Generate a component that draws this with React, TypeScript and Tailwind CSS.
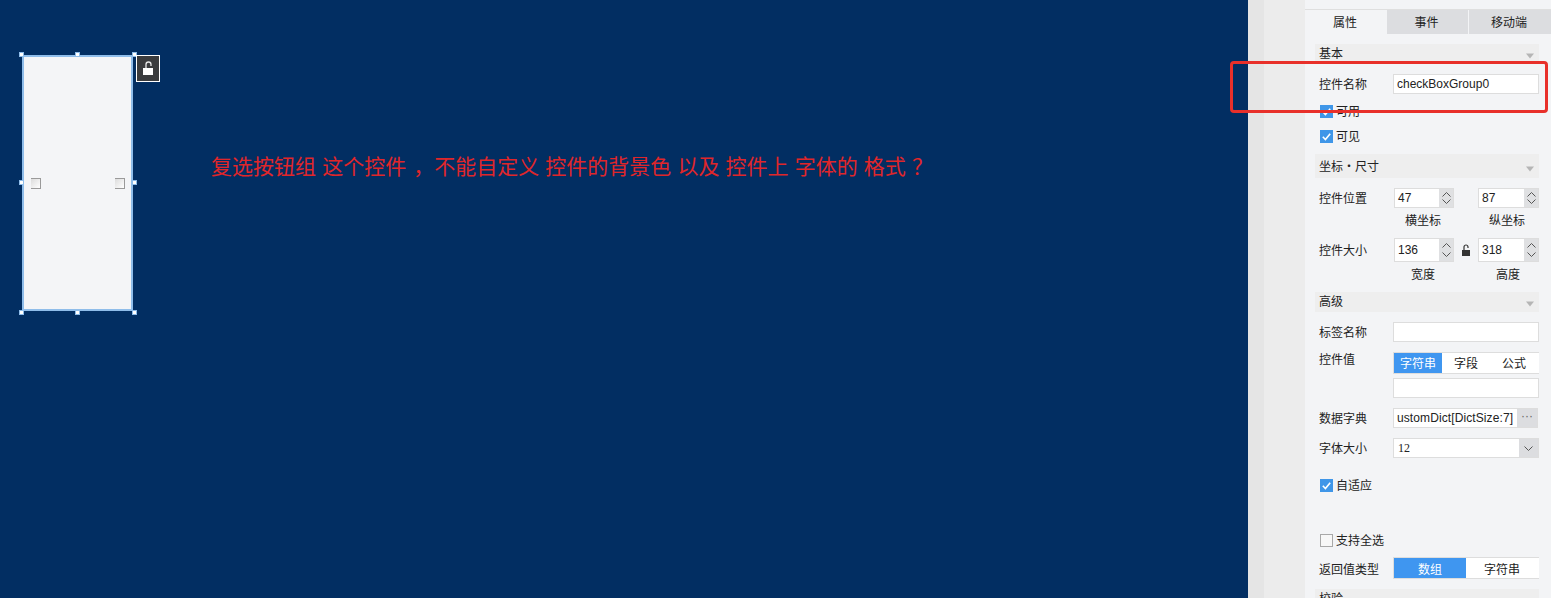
import type { ReactNode } from 'react';

const CJK = '[font-family:"Liberation_Sans","Noto_Sans_CJK_SC",sans-serif]';

function Section({ title, className = '' }: { title: string; className?: string }) {
  return (
    <div className={`flex items-center justify-between bg-[#eeeeee] pl-[4px] pr-[4px] ${className}`}>
      <span className="leading-none">{title}</span>
      <svg width="10" height="6" viewBox="0 0 10 6" className="mt-[4px]">
        <path d="M1 0.5h8L5 5.5z" fill="#b5b5b5" />
      </svg>
    </div>
  );
}

function Check({ label, checked = true, className = '' }: { label: string; checked?: boolean; className?: string }) {
  return (
    <div className={`flex items-center gap-[3px] pl-[5px] ${className}`}>
      {checked ? (
        <svg width="13" height="13" viewBox="0 0 13 13">
          <rect width="13" height="13" fill="#3f96e8" />
          <path d="M2.8 6.8l2.6 2.7 4.8-5.8" fill="none" stroke="#fff" strokeWidth="1.6" />
        </svg>
      ) : (
        <span className="h-[13px] w-[13px] border border-[#a8a8a8] bg-[#f7f7f7]" />
      )}
      <span className="leading-none">{label}</span>
    </div>
  );
}

function Row({
  label,
  children,
  className = 'h-[20px]',
  labelClass = 'leading-[22px]',
}: {
  label: string;
  children: ReactNode;
  className?: string;
  labelClass?: string;
}) {
  return (
    <div className={`flex ${className}`}>
      <span className={`w-[78px] shrink-0 pl-[4px] ${labelClass}`}>{label}</span>
      {children}
    </div>
  );
}

function Spinner({ value, tall = false, className = 'w-[61px]' }: { value: string; tall?: boolean; className?: string }) {
  return (
    <div className={`flex border border-[#dddddd] bg-white ${tall ? 'h-[24px] leading-[22px]' : 'h-[20px] leading-[18px]'} ${className}`}>
      <span className="flex-1 pl-[3px]">{value}</span>
      <div className="flex w-[14px] flex-col items-center justify-around bg-[#dfe0e2] py-[2px]">
        <svg width="9" height="5" viewBox="0 0 9 5">
          <path d="M0.5 4.5l4-4 4 4" fill="none" stroke="#555" />
        </svg>
        <svg width="9" height="5" viewBox="0 0 9 5">
          <path d="M0.5 0.5l4 4 4-4" fill="none" stroke="#555" />
        </svg>
      </div>
    </div>
  );
}

function Field({ children, className = '' }: { children?: ReactNode; className?: string }) {
  return <div className={`h-[20px] w-[146px] border border-[#dddddd] bg-white pl-[3px] leading-[18px] ${className}`}>{children}</div>;
}

function Handle({ className }: { className: string }) {
  return <span className={`absolute h-[5px] w-[5px] border border-[#8fbdea] bg-white ${className}`} />;
}

function Box({ className }: { className: string }) {
  return (
    <span
      className={`absolute top-[121px] h-[11px] w-[10px] border-r border-b border-t border-[#9a9a9a] border-l-0 bg-gradient-to-br from-[#dcdcdc] to-white ${className}`}
    />
  );
}

function Canvas() {
  return (
    <div className="relative h-full flex-1 bg-[#022e62]">
      {/* selected widget */}
      <div className="absolute left-[22px] top-[55px] h-[256px] w-[111px] border-2 border-[#8fbdea] bg-[#f4f5f7]">
        <Box className="left-[7px]" />
        <Box className="left-[91px]" />
      </div>
      <Handle className="left-[19px] top-[52px]" />
      <Handle className="left-[75px] top-[52px]" />
      <Handle className="left-[132px] top-[52px]" />
      <Handle className="left-[19px] top-[180px]" />
      <Handle className="left-[132px] top-[180px]" />
      <Handle className="left-[19px] top-[310px]" />
      <Handle className="left-[75px] top-[310px]" />
      <Handle className="left-[132px] top-[310px]" />
      <div className="absolute left-[136px] top-[55px] flex h-[27px] w-[24px] items-center justify-center border border-white bg-[#3a3b3d]">
        <svg width="12" height="15" viewBox="0 0 12 15">
          <path d="M4 7V3.5a2.5 2.5 0 0 1 5 0V5" fill="none" stroke="#e6e6e6" strokeWidth="1.3" />
          <rect x="1" y="7" width="10" height="7" fill="#fff" />
        </svg>
      </div>
      <div className={`absolute left-[211px] top-[152px] text-[21px] leading-[30px] whitespace-pre text-[#e0262a] [word-spacing:0.3px] ${CJK}`}>
        复选按钮组 这个控件<span className="ml-[7px]">，</span>不能自定义 控件的背景色 以及 控件上 字体的 格式 ？
      </div>
    </div>
  );
}

function Panel() {
  return (
    <div className={`h-full w-[246px] overflow-hidden bg-[#f3f4f6] text-[12px] text-[#222222] ${CJK}`}>
      <div className="h-[10px] border-b border-[#dfdfdf]" />
      <div className="flex h-[24px] text-center leading-[26px]">
        <span className="w-[82px] bg-[#f3f4f6] pr-[2px]">属性</span>
        <span className="w-[81px] bg-[#dcdde0] pr-[2px]">事件</span>
        <span className="ml-px w-[82px] bg-[#dcdde0] pr-[2px]">移动端</span>
      </div>

      <div className="w-[234px] pl-[10px]">
        <Section title="基本" className="mt-[10px] h-[20px]" />
        <Row label="控件名称" className="mt-[10px] h-[20px]">
          <Field>checkBoxGroup0</Field>
        </Row>
        <Check label="可用" className="mt-[11px]" />
        <Check label="可见" className="mt-[12px]" />

        <Section title="坐标・尺寸" className="mt-[11px] h-[24px] pt-[2px]" />
        <Row label="控件位置" className="mt-[10px] h-[20px]">
          <span className="w-px" />
          <Spinner value="47" className="w-[60px]" />
          <span className="w-[24px]" />
          <Spinner value="87" />
        </Row>
        <div className="mt-[3px] flex h-[18px] pl-[78px] leading-[20px]">
          <span className="w-[61px] pl-[12px]">横坐标</span>
          <span className="w-[24px]" />
          <span className="w-[61px] pl-[11px]">纵坐标</span>
        </div>
        <div className="mt-[9px] flex h-[24px]">
          <span className="w-[78px] pl-[4px] leading-[26px]">控件大小</span>
          <span className="w-px" />
          <Spinner value="136" tall className="w-[60px]" />
          <span className="flex w-[24px] items-center justify-center">
            <svg width="9" height="12" viewBox="0 0 9 12">
              <path d="M2 6V3a2 2 0 0 1 4 0v1" fill="none" stroke="#333" strokeWidth="1.2" />
              <rect y="6" width="8" height="6" fill="#333" />
            </svg>
          </span>
          <Spinner value="318" tall />
        </div>
        <div className="mt-[3px] flex h-[18px] pl-[78px] leading-[20px]">
          <span className="w-[61px] pl-[18px]">宽度</span>
          <span className="w-[24px]" />
          <span className="w-[61px] pl-[18px]">高度</span>
        </div>

        <Section title="高级" className="mt-[9px] h-[20px]" />
        <Row label="标签名称" className="mt-[10px] h-[20px]">
          <Field />
        </Row>
        <Row label="控件值" className="mt-[10px] h-[22px]" labelClass="leading-[16px]">
          <div className="flex h-[22px] w-[146px] border-y border-l border-[#dddddd] bg-white text-center leading-[22px]">
            <span className="w-[48px] bg-[#3f96f0] text-white">字符串</span>
            <span className="w-[48px]">字段</span>
            <span className="w-[48px]">公式</span>
          </div>
        </Row>
        <Field className="mt-[4px] ml-[78px]" />
        <Row label="数据字典" className="mt-[10px] h-[20px]">
          <div className="flex h-[20px] w-[145px] border border-[#dddddd] bg-white leading-[18px]">
            <span className="w-[123px] overflow-hidden pl-[3px] tracking-[0.1px] whitespace-nowrap">ustomDict[DictSize:7]</span>
            <span className="flex-1 bg-[#dcdde0] text-center leading-[14px] text-[#666666]">···</span>
          </div>
        </Row>
        <Row label="字体大小" className="mt-[10px] h-[20px]">
          <div className="flex h-[20px] w-[146px] border border-[#dddddd] bg-white leading-[18px]">
            <span className="flex-1 pl-[4px] font-['Liberation_Serif'] text-[12px]">12</span>
            <span className="flex w-[19px] items-center justify-center bg-[#dcdde0]">
              <svg width="9" height="5" viewBox="0 0 9 5">
                <path d="M0.5 0.5l4 4 4-4" fill="none" stroke="#555" />
              </svg>
            </span>
          </div>
        </Row>
        <Check label="自适应" className="mt-[21px]" />
        <Check label="支持全选" checked={false} className="mt-[42px]" />
        <Row label="返回值类型" className="mt-[10px] h-[22px]" labelClass="leading-[26px]">
          <div className="flex h-[22px] w-[146px] border-y border-l border-[#dddddd] bg-white text-center leading-[24px]">
            <span className="w-[72px] bg-[#3f96f0] text-white">数组</span>
            <span className="w-[72px]">字符串</span>
          </div>
        </Row>
        <Section title="校验" className="mt-[10px] h-[20px]" />
      </div>
    </div>
  );
}

export default function App() {
  return (
    <div className="relative flex h-[598px] w-[1551px] overflow-hidden">
      <Canvas />
      <div className="h-full w-[16px] bg-[#e5e5e5]" />
      <div className="h-full w-[41px] bg-[#ececec]" />
      <Panel />
      {/* red annotation frame */}
      <div className="absolute left-[1230px] top-[61px] h-[52px] w-[318px] rounded-[4px] border-[3px] border-[#e8302a]" />
    </div>
  );
}
